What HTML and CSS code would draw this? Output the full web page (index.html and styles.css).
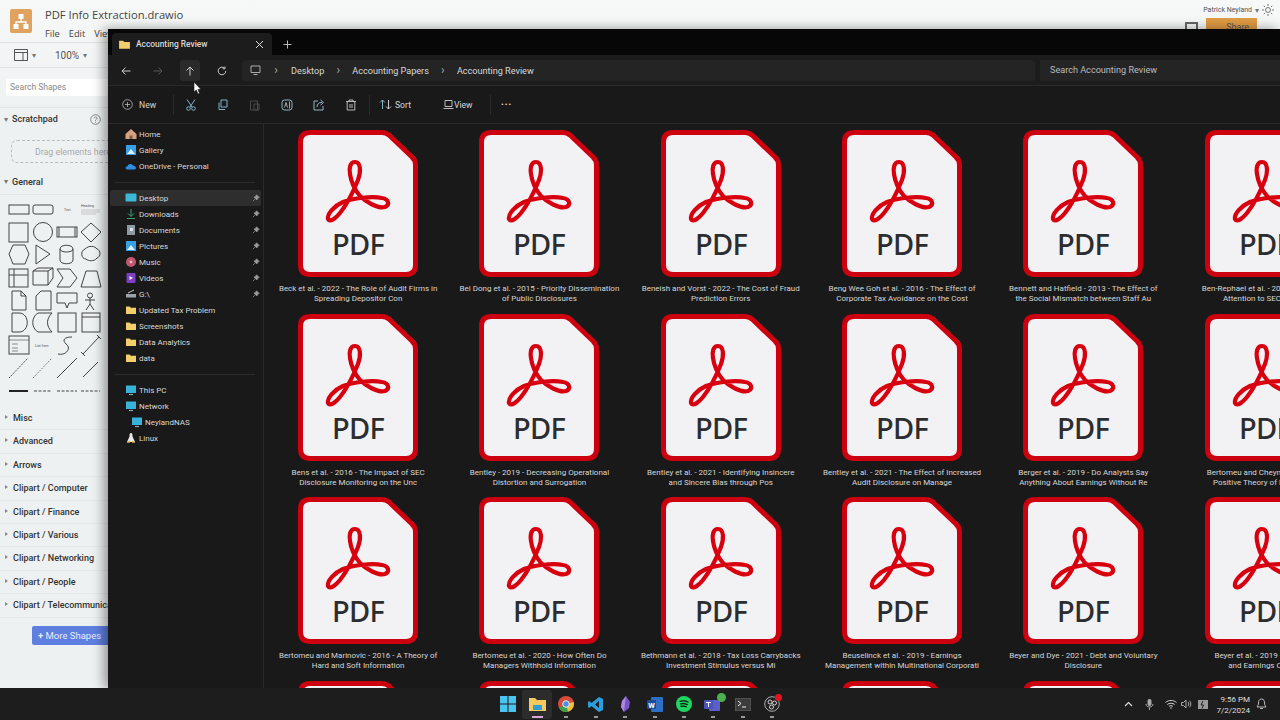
FILE: index.html
```html
<!DOCTYPE html>
<html lang="en">
<head>
    <meta charset="UTF-8">
    <meta name="viewport" content="width=device-width, initial-scale=1.0">
    <title>Accounting Review</title>
    <link rel="stylesheet" href="styles.css">
</head>
<body>
    <svg class="defs" width="0" height="0">
        <symbol id="pdf" viewBox="0 0 120 147">
            <path d="M12 2.5H84Q88 2.5 91 5L114 27Q117.5 30 117.5 35V135Q117.5 144.5 108 144.5H12Q2.5 144.5 2.5 135V12Q2.5 2.5 12 2.5Z" fill="#f2f2f4" stroke="#cc000e" stroke-width="5"/>
            <path d="M57 32C52 32 51 38 52 44C53 52 57 60 62 66C68 72 80 79 87 77C92 75 91 69 84 68C74 66 55 68 45 72C36 76 29 84 30 89C32 93 38 88 42 83C50 73 56 60 60 50C63 42 63 32 57 32Z" fill="none" stroke="#d8000f" stroke-width="4.2"/>
            <text x="60" y="125" text-anchor="middle" class="pdf-word">PDF</text>
        </symbol>
        <symbol id="folder" viewBox="0 0 12 12">
            <path d="M1 2.5H4.5L6 3.8H11V10H1Z" fill="#f2cf6b"/>
        </symbol>
        <symbol id="pin" viewBox="0 0 8 8">
            <path d="M4.5 .8L7.2 3.5L6 4L4.8 6L2 3.2L4 2ZM2.8 5.2L.8 7.2" fill="#9a9a9a" stroke="#9a9a9a" stroke-width=".7"/>
        </symbol>
        <symbol id="monitor" viewBox="0 0 12 12">
            <path d="M1 1.5H11V9H1Z" fill="#38b2d8"/>
            <path d="M4 10.5H8" stroke="#8fa7b0" stroke-width="1.2"/>
        </symbol>
    </svg>

    <div class="desktop">
        <div class="stage">
            <div class="drawio">
                <header class="dio-head">
                    <svg class="dio-logo" width="22" height="24" viewBox="0 0 22 24">
                        <rect width="22" height="24" rx="2" fill="#e0a35f"/>
                        <path d="M11 9V13M6 16V13H16V16" stroke="#fff" stroke-width="1.3" fill="none"/>
                        <rect x="8.5" y="5" width="5" height="5" fill="#fff"/>
                        <rect x="3.5" y="15" width="5" height="5" fill="#fff"/>
                        <rect x="13.5" y="15" width="5" height="5" fill="#fff"/>
                    </svg>
                    <div>
                        <div class="dio-title">PDF Info Extraction.drawio</div>
                        <nav class="dio-menu"><span>File</span><span>Edit</span><span>View</span></nav>
                    </div>
                    <div class="dio-user">
                        <div class="user-line">
                            <span>Patrick Neyland</span>
                            <span class="caret">▾</span>
                            <svg width="12" height="12" viewBox="0 0 12 12"><circle cx="6" cy="6" r="2.5" fill="none" stroke="#555" stroke-width=".8"/><path d="M6 0V2M6 10V12M0 6H2M10 6H12M1.8 1.8L3 3M9 9L10.2 10.2M1.8 10.2L3 9M9 3L10.2 1.8" stroke="#555" stroke-width=".8"/></svg>
                        </div>
                        <div class="share-line">
                            <span class="screen-ico"></span>
                            <span class="share-btn">Share</span>
                        </div>
                    </div>
                </header>
                <div class="dio-tools">
                    <svg width="14" height="14" viewBox="0 0 14 14"><path d="M.5 1.5H13.5V12.5H.5ZM.5 4.5H13.5M9 4.5V12.5" fill="none" stroke="#555"/></svg>
                    <span class="caret">▾</span>
                    <span class="zoom-val">100%</span>
                    <span class="caret">▾</span>
                </div>
                <div class="dio-search-wrap">
                    <div class="dio-search">Search Shapes</div>
                </div>
                <div class="dio-section scratch">
                    <span class="caret">▾</span><b>Scratchpad</b>
                    <svg class="help" width="11" height="11" viewBox="0 0 11 11"><circle cx="5.5" cy="5.5" r="4.8" fill="none" stroke="#888"/><path d="M4 4.3Q4.3 3 5.5 3Q7 3 7 4.3Q7 5 5.5 6V6.8M5.5 7.8V8.6" fill="none" stroke="#888"/></svg>
                </div>
                <div class="drag-box">Drag elements here</div>
                <div class="dio-section general"><span class="caret">▾</span><b>General</b></div>
                <svg class="shapes" width="108" height="196" viewBox="0 0 108 196" fill="none" stroke="#444" stroke-width="1">
                    <rect x="9" y="5" width="20" height="9"/><rect x="33" y="5" width="20" height="9" rx="2"/>
                    <text x="64" y="11" class="tiny">Text</text><text x="81" y="7" class="tiny">Heading</text>
                    <path d="M81 10H100M81 12H100M81 14H96" stroke="#aaa" stroke-width=".6"/>
                    <rect x="9" y="23" width="19" height="19"/><circle cx="43" cy="32" r="9.5"/><rect x="57" y="27" width="20" height="10"/><path d="M59 27V37M75 27V37M91 23L101 32L91 42L81 32Z"/>
                    <path d="M13 45H25L29 54L25 64H13L9 54ZM36 45L50 54L36 64ZM60 49C60 44 73 44 73 49V60C73 65 60 65 60 60ZM60 49C60 53 73 53 73 49M85 49C89 45 95 46 97 49C101 50 101 57 97 58C94 62 88 61 86 59C81 59 80 51 85 49Z"/>
                    <rect x="9" y="69" width="19" height="18"/><path d="M9 75H28M14 69V87M33 71L38 68H53V78L48 85H33ZM33 71H48V85M48 71L53 68M57 69H70L77 78L70 87H57L63 78ZM86 71H97L101 87H81Z"/>
                    <path d="M12 91H21L26 96V110H12ZM21 91V96H26M41 91H51V110H36V96ZM57 93H77V103H69L67 108L65 103H57ZM90 93A2.5 2.5 0 1 1 90 98A2.5 2.5 0 1 1 90 93ZM90 98V104M85 100H95M90 104L86 110M90 104L94 110"/>
                    <path d="M12 113H19C30 113 30 132 19 132H12ZM38 113H52C46 119 46 126 52 132H38C31 128 31 117 38 113Z"/><rect x="58" y="113" width="18" height="19"/><rect x="82" y="113" width="18" height="19"/><path d="M82 117H100"/>
                    <rect x="9" y="136" width="20" height="18"/><path d="M9 140H29M12 144H18M12 148H18M12 151H18" stroke-width=".6"/><text x="35" y="147" class="tiny">List Item</text>
                    <path d="M58 154C66 156 72 148 66 144C62 140 64 137 72 137M83 154L99 137M85 156L81 152M97 135L101 139"/>
                    <path d="M9 178L28 158" stroke-dasharray="1.5 1"/><path d="M33 178L52 158" stroke-dasharray="1 1.5"/><path d="M57 178L77 158M83 177L98 162"/>
                    <path d="M9 191H28" stroke="#222" stroke-width="2"/><path d="M34 191H52M57 191H77M81 191H100" stroke-dasharray="3 1.5"/>
                </svg>
                <ul class="dio-list">
                    <li>Misc</li>
                    <li>Advanced</li>
                    <li>Arrows</li>
                    <li>Clipart / Computer</li>
                    <li>Clipart / Finance</li>
                    <li>Clipart / Various</li>
                    <li>Clipart / Networking</li>
                    <li>Clipart / People</li>
                    <li>Clipart / Telecommunication</li>
                </ul>
                <div class="more-row"><span class="more-btn"><b>+</b> More Shapes</span></div>
            </div>

            <div class="explorer">
                <div class="tabbar">
                    <div class="tab">
                        <svg width="13" height="13"><use href="#folder"/></svg>
                        <span class="tab-name">Accounting Review</span>
                        <svg class="tab-x" width="9" height="9" viewBox="0 0 9 9"><path d="M1 1L8 8M8 1L1 8" stroke="#ddd"/></svg>
                    </div>
                    <svg class="tab-add" width="9" height="9" viewBox="0 0 9 9"><path d="M4.5 .5V8.5M.5 4.5H8.5" stroke="#bbb"/></svg>
                </div>
                <div class="navbar">
                    <div class="nav-btns">
                        <span class="nav-btn"><svg width="10" height="10" viewBox="0 0 10 10"><path d="M9.5 5H1M4.5 1.5L1 5L4.5 8.5" fill="none" stroke="#ccc"/></svg></span>
                        <span class="nav-btn"><svg width="10" height="10" viewBox="0 0 10 10"><path d="M.5 5H9M5.5 1.5L9 5L5.5 8.5" fill="none" stroke="#555"/></svg></span>
                        <span class="nav-btn up"><svg width="10" height="10" viewBox="0 0 10 10"><path d="M5 9.5V1M1.5 4.5L5 1L8.5 4.5" fill="none" stroke="#ccc"/></svg></span>
                        <span class="nav-btn"><svg width="10" height="10" viewBox="0 0 10 10"><path d="M8.8 5A3.8 3.8 0 1 1 7.5 2.1M8 .5V2.8H5.7" fill="none" stroke="#ccc"/></svg></span>
                    </div>
                    <div class="address">
                        <svg class="addr-pc" width="11" height="11" viewBox="0 0 11 11"><path d="M1 1H10V7.5H1ZM3.5 9.5H7.5" fill="none" stroke="#aaa"/></svg>
                        <i class="chev first">›</i><span>Desktop</span>
                        <i class="chev">›</i><span>Accounting Papers</span>
                        <i class="chev">›</i><span>Accounting Review</span>
                    </div>
                    <div class="searchbox">Search Accounting Review</div>
                </div>
                <div class="cmdbar">
                    <span class="cmd-new">
                        <svg width="11" height="11" viewBox="0 0 11 11"><circle cx="5.5" cy="5.5" r="4.8" fill="none" stroke="#bbb" stroke-width=".8"/><path d="M5.5 3V8M3 5.5H8" stroke="#bbb" stroke-width=".8"/></svg>
                        New
                    </span>
                    <i class="cmd-sep"></i>
                    <div class="cmd-icons">
                        <svg width="32" height="12" viewBox="-10 0 32 12"><path d="M2 .5L7 8M10 .5L5 8" stroke="#7fb4c4" fill="none"/><circle cx="3.5" cy="9.5" r="1.8" fill="none" stroke="#7fb4c4"/><circle cx="8.5" cy="9.5" r="1.8" fill="none" stroke="#7fb4c4"/></svg>
                        <svg width="32" height="12" viewBox="-10 0 32 12"><path d="M4 1H10V8H4ZM2 3.5V10.5H8" fill="none" stroke="#7fb4c4"/></svg>
                        <svg width="32" height="12" viewBox="-10 0 32 12"><path d="M1.5 2H8.5V11H1.5ZM5 5H10V11H5Z" fill="none" stroke="#4a4a4a"/></svg>
                        <svg width="32" height="12" viewBox="-10 0 32 12"><rect x="1" y="1" width="10" height="10" rx="2.5" fill="none" stroke="#8fb6c4"/><path d="M3.5 8.5L5 3.5L6.5 8.5M8.5 2.5V9.5" fill="none" stroke="#ccc" stroke-width=".8"/></svg>
                        <svg width="32" height="12" viewBox="-10 0 32 12"><path d="M5 2H1V11H10V7M4 8C4 5 6 3.5 8 3.5H9M7.5 .8L10.5 3.5L7.5 6.2" fill="none" stroke="#8fb6c4"/></svg>
                        <svg width="32" height="12" viewBox="-10 0 32 12"><path d="M1 2.5H11M4 2.5V1H8V2.5M2.2 2.5V11H9.8V2.5M5 5V9M7 5V9" fill="none" stroke="#ccc" stroke-width=".9"/></svg>
                    </div>
                    <i class="cmd-sep"></i>
                    <span class="cmd-sort">
                        <svg width="13" height="11" viewBox="0 0 13 11"><path d="M3.5 10V1M1 3.5L3.5 1L6 3.5" fill="none" stroke="#7fb4c4"/><path d="M9.5 1V10M7 7.5L9.5 10L12 7.5" fill="none" stroke="#ccc"/></svg>
                        Sort
                    </span>
                    <span class="cmd-view">
                        <svg width="11" height="11" viewBox="0 0 11 11"><path d="M2 1.5H9V7.5H2ZM.5 9.5H10.5" fill="none" stroke="#bbb"/></svg>
                        View
                    </span>
                    <i class="cmd-sep"></i>
                    <span class="cmd-more">•••</span>
                </div>
                <div class="panes">
                    <aside class="tree">
                        <div class="tree-row"><svg width="12" height="12" viewBox="0 0 12 12"><path d="M6 1L11.5 6V11H.5V6Z" fill="#d9a27e"/><path d="M4.5 11V7.5H7.5V11" fill="#7b5f4e"/></svg>Home</div>
                        <div class="tree-row"><svg width="12" height="12" viewBox="0 0 12 12"><rect x="1" y="1" width="10" height="10" fill="#3aa0e6"/><path d="M2 10L6 5L10 10Z" fill="#d8f0ff"/></svg>Gallery</div>
                        <div class="tree-row"><svg width="12" height="12" viewBox="0 0 12 12"><path d="M2.5 9.5C0 9.5 0 6.5 2.5 6.3C3 3.5 7 3 8 5.5C11 5.3 12 9.5 9.5 9.5Z" fill="#2f8ee0"/></svg>OneDrive - Personal</div>
                        <hr class="tree-line">
                        <div class="tree-row on"><svg width="12" height="12" viewBox="0 0 12 12"><rect x=".5" y="1.5" width="11" height="8" rx="1" fill="#3db7d6"/></svg>Desktop<svg class="pin" width="8" height="8"><use href="#pin"/></svg></div>
                        <div class="tree-row"><svg width="12" height="12" viewBox="0 0 12 12"><path d="M6 1V8M3 5.5L6 8.5L9 5.5M2 10.5H10" fill="none" stroke="#3aa574"/></svg>Downloads<svg class="pin" width="8" height="8"><use href="#pin"/></svg></div>
                        <div class="tree-row"><svg width="12" height="12" viewBox="0 0 12 12"><rect x="2" y="1" width="8" height="10" fill="#8c9aa3"/><rect x="5" y="4" width="3" height="3" fill="#dde"/></svg>Documents<svg class="pin" width="8" height="8"><use href="#pin"/></svg></div>
                        <div class="tree-row"><svg width="12" height="12" viewBox="0 0 12 12"><rect x="1" y="1" width="10" height="10" fill="#3aa0e6"/><path d="M2 10L6 5L10 10Z" fill="#d8f0ff"/></svg>Pictures<svg class="pin" width="8" height="8"><use href="#pin"/></svg></div>
                        <div class="tree-row"><svg width="12" height="12" viewBox="0 0 12 12"><circle cx="6" cy="6" r="5" fill="#c2566e"/><circle cx="6" cy="6" r="1.3" fill="#f0c0cc"/></svg>Music<svg class="pin" width="8" height="8"><use href="#pin"/></svg></div>
                        <div class="tree-row"><svg width="12" height="12" viewBox="0 0 12 12"><rect x="1.5" y="1" width="9" height="10" rx="1" fill="#7d3ec4"/><path d="M4.5 4L8 6L4.5 8Z" fill="#eee"/></svg>Videos<svg class="pin" width="8" height="8"><use href="#pin"/></svg></div>
                        <div class="tree-row"><svg width="12" height="12" viewBox="0 0 12 12"><path d="M1 6H11V9.5H1Z" fill="#9aa3a8"/><path d="M3 5L9 2" stroke="#ccc"/></svg>G:\<svg class="pin" width="8" height="8"><use href="#pin"/></svg></div>
                        <div class="tree-row"><svg width="12" height="12"><use href="#folder"/></svg>Updated Tax Problem</div>
                        <div class="tree-row"><svg width="12" height="12"><use href="#folder"/></svg>Screenshots</div>
                        <div class="tree-row"><svg width="12" height="12"><use href="#folder"/></svg>Data Analytics</div>
                        <div class="tree-row"><svg width="12" height="12"><use href="#folder"/></svg>data</div>
                        <hr class="tree-line">
                        <div class="tree-row"><svg width="12" height="12"><use href="#monitor"/></svg>This PC</div>
                        <div class="tree-row"><svg width="12" height="12"><use href="#monitor"/></svg>Network</div>
                        <div class="tree-row sub"><svg width="12" height="12"><use href="#monitor"/></svg>NeylandNAS</div>
                        <div class="tree-row"><svg width="12" height="12" viewBox="0 0 12 12"><path d="M6 1C4.5 1 4.5 3 4.5 4.5L2 10H10L7.5 4.5C7.5 3 7.5 1 6 1Z" fill="#e8e8e8"/><path d="M2 10H5M7 10H10" stroke="#e5b13a" stroke-width="1.5"/></svg>Linux</div>
                    </aside>
                    <main class="files">
                        <figure class="tile"><svg class="pdf-ico"><use href="#pdf"/></svg><figcaption>Beck et al. - 2022 - The Role of Audit Firms in<br>Spreading Depositor Con</figcaption></figure>
                        <figure class="tile"><svg class="pdf-ico"><use href="#pdf"/></svg><figcaption>Bei Dong et al. - 2015 - Priority Dissemination<br>of Public Disclosures</figcaption></figure>
                        <figure class="tile"><svg class="pdf-ico"><use href="#pdf"/></svg><figcaption>Beneish and Vorst - 2022 - The Cost of Fraud<br>Prediction Errors</figcaption></figure>
                        <figure class="tile"><svg class="pdf-ico"><use href="#pdf"/></svg><figcaption>Beng Wee Goh et al. - 2016 - The Effect of<br>Corporate Tax Avoidance on the Cost</figcaption></figure>
                        <figure class="tile"><svg class="pdf-ico"><use href="#pdf"/></svg><figcaption>Bennett and Hatfield - 2013 - The Effect of<br>the Social Mismatch between Staff Au</figcaption></figure>
                        <figure class="tile"><svg class="pdf-ico"><use href="#pdf"/></svg><figcaption>Ben-Rephael et al. - 2017 - Directing<br>Attention to SEC Filings</figcaption></figure>

                        <figure class="tile"><svg class="pdf-ico"><use href="#pdf"/></svg><figcaption>Bens et al. - 2016 - The Impact of SEC<br>Disclosure Monitoring on the Unc</figcaption></figure>
                        <figure class="tile"><svg class="pdf-ico"><use href="#pdf"/></svg><figcaption>Bentley - 2019 - Decreasing Operational<br>Distortion and Surrogation</figcaption></figure>
                        <figure class="tile"><svg class="pdf-ico"><use href="#pdf"/></svg><figcaption>Bentley et al. - 2021 - Identifying Insincere<br>and Sincere Bias through Pos</figcaption></figure>
                        <figure class="tile"><svg class="pdf-ico"><use href="#pdf"/></svg><figcaption>Bentley et al. - 2021 - The Effect of Increased<br>Audit Disclosure on Manage</figcaption></figure>
                        <figure class="tile"><svg class="pdf-ico"><use href="#pdf"/></svg><figcaption>Berger et al. - 2019 - Do Analysts Say<br>Anything About Earnings Without Re</figcaption></figure>
                        <figure class="tile"><svg class="pdf-ico"><use href="#pdf"/></svg><figcaption>Bertomeu and Cheynel - 2016 - A<br>Positive Theory of Disclosure</figcaption></figure>

                        <figure class="tile"><svg class="pdf-ico"><use href="#pdf"/></svg><figcaption>Bertomeu and Marinovic - 2016 - A Theory of<br>Hard and Soft Information</figcaption></figure>
                        <figure class="tile"><svg class="pdf-ico"><use href="#pdf"/></svg><figcaption>Bertomeu et al. - 2020 - How Often Do<br>Managers Withhold Information</figcaption></figure>
                        <figure class="tile"><svg class="pdf-ico"><use href="#pdf"/></svg><figcaption>Bethmann et al. - 2018 - Tax Loss Carrybacks<br>Investment Stimulus versus Mi</figcaption></figure>
                        <figure class="tile"><svg class="pdf-ico"><use href="#pdf"/></svg><figcaption>Beuselinck et al. - 2019 - Earnings<br>Management within Multinational Corporati</figcaption></figure>
                        <figure class="tile"><svg class="pdf-ico"><use href="#pdf"/></svg><figcaption>Beyer and Dye - 2021 - Debt and Voluntary<br>Disclosure</figcaption></figure>
                        <figure class="tile"><svg class="pdf-ico"><use href="#pdf"/></svg><figcaption>Beyer et al. - 2019 - Earnings<br>and Earnings Quality</figcaption></figure>

                        <figure class="tile"><svg class="pdf-ico"><use href="#pdf"/></svg></figure>
                        <figure class="tile"><svg class="pdf-ico"><use href="#pdf"/></svg></figure>
                        <figure class="tile"><svg class="pdf-ico"><use href="#pdf"/></svg></figure>
                        <figure class="tile"><svg class="pdf-ico"><use href="#pdf"/></svg></figure>
                        <figure class="tile"><svg class="pdf-ico"><use href="#pdf"/></svg></figure>
                        <figure class="tile"><svg class="pdf-ico"><use href="#pdf"/></svg></figure>
                    </main>
                </div>
            </div>

            <svg class="cursor" width="9" height="14" viewBox="0 0 9 14"><path d="M1 1V11L3.3 9L5 13L6.5 12.3L5 8.5H8Z" fill="#fff" stroke="#111" stroke-width=".6"/></svg>
        </div>

        <footer class="taskbar">
            <div class="task-icons">
                <span class="task"><svg width="16" height="16" viewBox="0 0 16 16"><path d="M0 0H7.5V7.5H0ZM8.5 0H16V7.5H8.5ZM0 8.5H7.5V16H0ZM8.5 8.5H16V16H8.5Z" fill="#4cc2f1"/></svg></span>
                <span class="task open"><svg width="17" height="15" viewBox="0 0 17 15"><path d="M0 1H6L8 3H17V14H0Z" fill="#f4c95d"/><rect x="4" y="8" width="9" height="5" fill="#2f9fd8"/></svg></span>
                <span class="task dot"><svg width="16" height="16" viewBox="0 0 16 16"><circle cx="8" cy="8" r="8" fill="#d64a3a"/><path d="M8 8L1 12A8 8 0 0 0 10 15.7Z" fill="#3a9f4e"/><path d="M8 8L15.7 6A8 8 0 0 1 10 15.7Z" fill="#efc23a"/><circle cx="8" cy="8" r="3.3" fill="#4a8fe6" stroke="#eee"/></svg></span>
                <span class="task dot"><svg width="15" height="15" viewBox="0 0 15 15"><path d="M11 0L15 2V13L11 15L3.5 9L1 11L0 10V5L1 4L3.5 6ZM11 4L7 7.5L11 11Z" fill="#2a9fe0"/></svg></span>
                <span class="task dot"><svg width="11" height="16" viewBox="0 0 11 16"><path d="M6 0L10 6L9 12L4 16L1 11L2 5Z" fill="#7b52c7"/><path d="M6 0L5 7L4 16L1 11L2 5Z" fill="#a98be0"/></svg></span>
                <span class="task dot"><svg width="16" height="15" viewBox="0 0 16 15"><rect x="4" y="0" width="12" height="15" rx="1" fill="#2d6fc4"/><rect x="0" y="3" width="9" height="9" rx="1" fill="#1a4c98"/><text x="4.5" y="10.5" class="word-w">W</text></svg></span>
                <span class="task dot"><svg width="16" height="16" viewBox="0 0 16 16"><circle cx="8" cy="8" r="8" fill="#1ed760"/><path d="M3.5 5.5C7 4.5 10 5 12.5 6.3M4 8C7 7.3 9.5 7.6 11.7 8.8M4.5 10.4C7 9.9 9 10.1 10.8 11" stroke="#111" stroke-width="1.2" fill="none"/></svg></span>
                <span class="task dot"><svg width="18" height="15" viewBox="0 0 18 15"><rect x="5" y="3" width="11" height="11" rx="1" fill="#5b5fc7"/><rect x="0" y="3" width="9" height="9" rx="1" fill="#4b53bc"/><path d="M2 5.5H7M4.5 5.5V10" stroke="#fff"/></svg><i class="badge-ok"></i></span>
                <span class="task dot"><svg width="16" height="13" viewBox="0 0 16 13"><rect width="16" height="13" rx="1" fill="#3c3c3c" stroke="#888" stroke-width=".5"/><path d="M3 3L6 5.5L3 8M7 9H11" stroke="#eee" fill="none"/></svg></span>
                <span class="task dot"><svg width="16" height="16" viewBox="0 0 16 16"><circle cx="8" cy="8" r="7.3" fill="#222" stroke="#aaa"/><circle cx="6" cy="6" r="2" fill="none" stroke="#ccc"/><circle cx="10.5" cy="7" r="2" fill="none" stroke="#ccc"/><circle cx="7.5" cy="11" r="2" fill="none" stroke="#ccc"/></svg><i class="badge-red"></i></span>
            </div>
            <div class="tray">
                <svg class="t-chev" width="9" height="6" viewBox="0 0 9 6"><path d="M1 5L4.5 1.5L8 5" fill="none" stroke="#ddd" stroke-width="1.2"/></svg>
                <svg class="t-mic" width="9" height="13" viewBox="0 0 9 13"><rect x="2.5" y="1" width="4" height="7" rx="2" fill="#aaa"/><path d="M1 6C1 10 8 10 8 6M4.5 9.5V12" fill="none" stroke="#aaa"/></svg>
                <svg class="t-wifi" width="12" height="10" viewBox="0 0 12 10"><path d="M.5 3.5C3.5 .8 8.5 .8 11.5 3.5M2.3 5.5C4.3 3.8 7.7 3.8 9.7 5.5M4 7.3C5 6.5 7 6.5 8 7.3" fill="none" stroke="#ccc"/><circle cx="6" cy="9" r=".8" fill="#ccc"/></svg>
                <svg class="t-vol" width="11" height="10" viewBox="0 0 11 10"><path d="M.5 3.5H2.5L5 1V9L2.5 6.5H.5ZM7 3C8 4 8 6 7 7M8.5 1.8C10.3 3.5 10.3 6.5 8.5 8.2" fill="none" stroke="#ccc" stroke-width=".8"/></svg>
                <svg class="t-batt" width="12" height="11" viewBox="0 0 12 11"><rect x="1" y="1" width="10" height="9" fill="#999"/><path d="M6 2L4 6H6.5L5 9.5" stroke="#222" fill="none"/></svg>
                <div class="clock">9:56 PM<br>7/2/2024</div>
                <svg class="t-bell" width="11" height="12" viewBox="0 0 11 12"><path d="M5.5 1C3 1 2.5 3 2.5 5C2.5 7 1.5 8 1 9H10C9.5 8 8.5 7 8.5 5C8.5 3 8 1 5.5 1ZM4 10.5H7" fill="none" stroke="#ccc" stroke-width=".9"/></svg>
            </div>
        </footer>
    </div>
</body>
</html>
```

FILE: styles.css
```css
* {
    box-sizing: border-box;
}
body {
    margin: 0;
    font-family: Roboto, "Liberation Sans", sans-serif;
    background-color: #111;
}
.defs {
    display: block;
    height: 0;
}
.desktop {
    width: 1280px;
    height: 720px;
    display: flex;
    flex-direction: column;
    overflow: hidden;
}
.stage {
    position: relative;
    height: 688px;
    overflow: hidden;
}

/* draw.io behind the explorer window */
.drawio {
    height: 100%;
    background: linear-gradient(#f7f8f8, #eef1f2 120px);
    color: #333;
}
.dio-head {
    height: 43px;
    padding: 9px 6px 0 10px;
    display: flex;
    gap: 13px;
    border-bottom: 1px solid #dfe2e3;
}
.dio-title {
    font-family: "Open Sans", sans-serif;
    font-size: 11.2px;
    line-height: 12px;
    color: #444;
}
.dio-menu {
    display: flex;
    gap: 9px;
    margin-top: 6px;
    font-family: "Open Sans", sans-serif;
    font-size: 9.3px;
    color: #444;
}
.dio-user {
    margin-left: auto;
    font-size: 7px;
    color: #555;
}
.user-line {
    display: flex;
    align-items: center;
    gap: 3px;
    margin-top: -5px;
    height: 12px;
}
.share-line {
    display: flex;
    align-items: flex-start;
    gap: 8px;
    margin: 2px 0 0 -18px;
}
.screen-ico {
    width: 13px;
    height: 10px;
    margin-top: 4px;
    border: 2px solid #666;
}
.share-btn {
    width: 51px;
    height: 18px;
    background-color: #e09b45;
    padding: 4px 0 0 20px;
    font-size: 9px;
}
.caret {
    font-size: 8px;
    color: #777;
}
.dio-tools {
    height: 25px;
    padding-left: 14px;
    display: flex;
    align-items: center;
    gap: 4px;
    border-bottom: 1px solid #dfe2e3;
}
.zoom-val {
    margin-left: 15px;
    font-size: 10px;
    color: #555;
}
.dio-search-wrap {
    height: 40px;
    padding: 11px 0 0 6px;
    border-bottom: 1px solid #e2e5e6;
}
.dio-search {
    width: 102px;
    height: 17px;
    padding: 3px 4px;
    background-color: #fff;
    border-radius: 2px;
    font-size: 8.5px;
    color: #888;
}
.dio-section {
    display: flex;
    align-items: center;
    gap: 4px;
    padding-left: 4px;
    font-size: 9px;
}
.dio-section b {
    font-weight: 500;
}
.dio-section.scratch {
    height: 22px;
}
.help {
    margin-left: 28px;
}
.drag-box {
    width: 110px;
    height: 23px;
    margin: 10px 0 0 11px;
    padding: 6px 0 0 23px;
    border: 1px dashed #bbb;
    border-radius: 6px;
    font-size: 8.8px;
    color: #aaa;
    white-space: nowrap;
}
.dio-section.general {
    height: 26px;
    margin-top: 6px;
    border-bottom: 1px solid #e2e5e6;
}
.shapes {
    display: block;
    margin-top: 5px;
}
.tiny {
    font-size: 3.5px;
    fill: #555;
    stroke: none;
}
.dio-list {
    list-style: none;
    margin: 11px 0 0;
    padding: 0;
    width: 108px;
    overflow: hidden;
}
.dio-list li {
    height: 23.4px;
    line-height: 23px;
    padding-left: 13px;
    font-size: 9px;
    font-weight: 500;
    white-space: nowrap;
    border-bottom: 1px solid #e6e9ea;
    position: relative;
}
.dio-list li::before {
    content: "";
    position: absolute;
    left: 5px;
    top: 8px;
    border-left: 3px solid #888;
    border-top: 2.5px solid transparent;
    border-bottom: 2.5px solid transparent;
}
.more-row {
    padding: 8px 0 0 32px;
}
.more-btn {
    display: block;
    width: 80px;
    height: 19px;
    padding: 4px 0 0 6px;
    background-color: #5f7fe0;
    border-radius: 2px;
    color: #e8edff;
    font-size: 9.5px;
    white-space: nowrap;
}

/* explorer window */
.explorer {
    position: absolute;
    left: 108px;
    top: 29px;
    width: 1172px;
    height: 659px;
    display: flex;
    flex-direction: column;
    background-color: #191919;
    color: #d8d8d8;
    box-shadow: -4px 0 12px rgba(0, 0, 0, 0.4);
    border-top-left-radius: 4px;
}
.tabbar {
    height: 26px;
    padding: 4px 0 0 4px;
    display: flex;
    align-items: center;
    background-color: #070707;
}
.tab {
    width: 160px;
    height: 22px;
    padding: 0 8px 0 6px;
    display: flex;
    align-items: center;
    gap: 5px;
    background-color: #1c1c1c;
    border-radius: 4px 4px 0 0;
    font-size: 8.4px;
    font-weight: 500;
    white-space: nowrap;
}
.tab-x {
    margin-left: auto;
}
.tab-add {
    margin-left: 11px;
}
.navbar {
    height: 31px;
    padding: 5px 0 0;
    display: flex;
    background-color: #1c1c1c;
    border-bottom: 1px solid #2a2a2a;
}
.nav-btns {
    width: 134px;
    padding-left: 2px;
    display: flex;
}
.nav-btn {
    width: 32px;
    height: 21px;
    display: flex;
    align-items: center;
    justify-content: center;
}
.nav-btn.up {
    width: 20px;
    margin: 0 6px;
    background-color: #2a2a2a;
    border-radius: 3px;
}
.address {
    width: 793px;
    height: 21px;
    padding-left: 8px;
    display: flex;
    align-items: center;
    background-color: #242424;
    border-radius: 3px;
    font-size: 9.1px;
    white-space: nowrap;
}
.chev {
    flex: none;
    width: 28px;
    text-align: center;
    font-style: normal;
    font-size: 12px;
    color: #aaa;
    margin-top: -2px;
}
.chev.first {
    width: 30px;
}
.searchbox {
    flex: 1;
    height: 21px;
    margin-left: 5px;
    padding: 5px 0 0 10px;
    background-color: #242424;
    font-size: 9.1px;
    color: #bbb;
}
.cmdbar {
    height: 38px;
    padding-left: 14px;
    display: flex;
    align-items: center;
    background-color: #191919;
    border-bottom: 1px solid #2a2a2a;
    font-size: 8.6px;
}
.cmd-new, .cmd-sort, .cmd-view {
    display: flex;
    align-items: center;
    gap: 6px;
    white-space: nowrap;
}
.cmd-new {
    width: 51px;
}
.cmd-sep {
    width: 1px;
    height: 20px;
    background-color: #2b2b2b;
}
.cmd-icons {
    display: flex;
    width: 195px;
    padding-left: 1px;
}
.cmd-sort {
    width: 64px;
    margin-left: 9px;
    gap: 3px;
}
.cmd-view {
    width: 47px;
    gap: 0;
}
.cmd-view svg {
    margin-right: 0;
}
.cmd-more {
    margin-left: 10px;
    font-size: 8px;
    letter-spacing: 1px;
    color: #ddd;
}
.panes {
    flex: 1;
    display: flex;
    min-height: 0;
}
.tree {
    width: 156px;
    flex: none;
    padding: 2px 2px 0 2px;
    border-right: 1px solid #2a2a2a;
    font-size: 8px;
}
.tree-row {
    height: 16px;
    padding-left: 15px;
    display: flex;
    align-items: center;
    gap: 2px;
    border-radius: 2px;
    white-space: nowrap;
}
.tree-row.on {
    background-color: #2e2e2e;
}
.tree-row.sub {
    padding-left: 21px;
}
.pin {
    margin-left: auto;
    margin-right: 1px;
}
.tree-line {
    height: 1px;
    margin: 8px 6px 7px 4px;
    border: 0;
    background-color: #2c2c2c;
}
.files {
    flex: 1;
    padding: 6px 0 0 3.5px;
    display: grid;
    grid-template-columns: repeat(6, 181.3px);
    grid-auto-rows: 183.5px;
    overflow: hidden;
}
.tile {
    margin: 0;
    text-align: center;
    white-space: nowrap;
}
.pdf-ico {
    display: block;
    width: 120px;
    height: 147px;
    margin: 0 auto;
}
.pdf-word {
    font-family: "Noto Sans", sans-serif;
    font-size: 29px;
    font-weight: 500;
    fill: #2b2d30;
    letter-spacing: -0.8px;
}
.tile figcaption {
    margin-top: 7px;
    font-size: 8px;
    line-height: 10px;
    color: #d6d6d6;
}
.cursor {
    position: absolute;
    left: 193px;
    top: 81px;
}

/* taskbar */
.taskbar {
    height: 32px;
    display: flex;
    align-items: center;
    background-color: #1d1d1d;
}
.task-icons {
    display: flex;
    margin-left: 493px;
}
.task {
    width: 29.4px;
    height: 29px;
    display: flex;
    align-items: center;
    justify-content: center;
    position: relative;
}
.task.open {
    background-color: #2c2c2c;
    border-radius: 3px;
}
.task.open::after, .task.dot::after {
    content: "";
    position: absolute;
    bottom: 1px;
    left: 50%;
    width: 4px;
    height: 1.5px;
    margin-left: -2px;
    background-color: #999;
}
.task.open::after {
    width: 11px;
    margin-left: -5.5px;
    background-color: #d9a6d6;
}
.badge-ok, .badge-red {
    position: absolute;
    border-radius: 50%;
}
.badge-ok {
    right: 2px;
    top: 3px;
    width: 9px;
    height: 9px;
    background-color: #4caf50;
}
.badge-red {
    right: 5px;
    top: 4px;
    width: 7px;
    height: 7px;
    background-color: #e81123;
}
.word-w {
    font-size: 7.5px;
    font-weight: bold;
    text-anchor: middle;
    fill: #fff;
}
.tray {
    margin-left: auto;
    padding-right: 13px;
    display: flex;
    align-items: center;
}
.t-mic {
    margin-left: 12px;
}
.t-wifi {
    margin-left: 11px;
}
.t-vol {
    margin-left: 4px;
}
.t-batt {
    margin-left: 5px;
}
.clock {
    width: 36px;
    margin: 1px 0 0 5px;
    font-size: 8px;
    line-height: 11px;
    text-align: right;
    color: #ddd;
}
.t-bell {
    margin-left: 6px;
}
```
